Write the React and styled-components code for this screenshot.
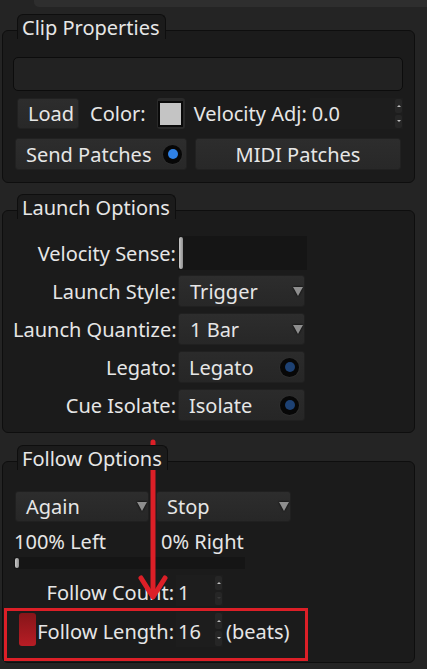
import React from "react";
import styled, { createGlobalStyle } from "styled-components";

const GlobalStyle = createGlobalStyle`
  html, body {
    margin: 0;
    padding: 0;
    background: #242424;
  }
`;

const Screen = styled.div`
  position: relative;
  width: 427px;
  height: 669px;
  overflow: hidden;
  background: #242424;
  display: flex;
  flex-direction: column;
  font-family: "Noto Sans", "DejaVu Sans", sans-serif;
  font-size: 20px;
  color: #e6e6e6;
  box-sizing: border-box;

  * {
    box-sizing: border-box;
  }
`;

const TopStrip = styled.div`
  margin-left: 34px;
  height: 7px;
  background: #2e2e2e;
  border-bottom-left-radius: 5px;
`;

const Group = styled.section`
  display: flex;
  flex-direction: column;
  margin: ${(p) => p.$top}px 12px 0 2px;
`;

const Tab = styled.div`
  align-self: flex-start;
  position: relative;
  z-index: 1;
  margin-left: 15px;
  margin-bottom: -9px;
  height: 25px;
  padding: 0 5px 0 4px;
  line-height: 26px;
  background: #1b1b1b;
  border: 1px solid #0e0e0e;
  border-bottom: none;
  border-radius: 6px 6px 0 0;
  white-space: nowrap;
`;

const Panel = styled.div`
  display: flex;
  flex-direction: column;
  background: #1b1b1b;
  border: 1px solid #0e0e0e;
  border-radius: 6px;
  padding: ${(p) => p.$pad};
`;

const TextInput = styled.div`
  height: 34px;
  background: #222222;
  border: 1px solid #0c0c0c;
  border-radius: 5px;
`;

const Row = styled.div`
  display: flex;
  align-items: center;
  gap: ${(p) => p.$gap || 0}px;
  height: ${(p) => p.$h}px;
  margin-top: ${(p) => p.$mt || 0}px;
  margin-left: ${(p) => p.$ml || 0}px;
`;

const Button = styled.div`
  display: flex;
  align-items: center;
  justify-content: ${(p) => (p.$center ? "center" : "space-between")};
  width: ${(p) => p.$w}px;
  height: 100%;
  padding: 0 ${(p) => (p.$center ? 0 : 4)}px 0 ${(p) => (p.$center ? 0 : 10)}px;
  background: linear-gradient(#2d2d2d, #282828);
  border: 1px solid #212121;
  border-radius: 3px;
  white-space: nowrap;
`;

const Label = styled.span`
  white-space: nowrap;
  margin-left: ${(p) => p.$ml || 0}px;
`;

const SwatchButton = styled.div`
  display: flex;
  align-items: center;
  justify-content: center;
  flex: none;
  width: 28px;
  height: 100%;
  margin-left: 11px;
  background: #2a2a2a;
  border-radius: 3px;

  &::after {
    content: "";
    width: 21px;
    height: 22px;
    background: #c4c4c4;
    border: 2px solid #0a0a0a;
  }
`;

const Radio = styled.span`
  display: inline-flex;
  align-items: center;
  justify-content: center;
  flex: none;
  width: 19px;
  height: 19px;
  border-radius: 50%;
  background: #070707;
  box-shadow: 0 0 0 1px #2e2e2e;

  &::after {
    content: "";
    width: 10px;
    height: 10px;
    border-radius: 50%;
    background: ${(p) => (p.$bright ? "#2f80e4" : "#1d4173")};
  }
`;

const SpinBox = styled.div`
  display: flex;
  align-items: center;
  justify-content: space-between;
  flex: ${(p) => (p.$fill ? 1 : "none")};
  width: ${(p) => (p.$fill ? "auto" : `${p.$w}px`)};
  height: 100%;
  margin-left: ${(p) => p.$ml || 0}px;
  padding: 0 1px 0 2px;
  background: #1d1d1d;
`;

const SpinArrows = styled.div`
  display: flex;
  flex-direction: column;
  gap: 2px;
  height: 100%;
  padding: 1px 0;
`;

const SpinArrow = styled.span`
  flex: 1;
  width: 7px;
  display: flex;
  align-items: center;
  justify-content: center;
  background: #262626;
  border-radius: 2px;

  &::after {
    content: "";
    border-left: 2px solid transparent;
    border-right: 2px solid transparent;
    ${(p) => (p.$down ? "border-top" : "border-bottom")}: 2px solid
      ${(p) => (p.$dim ? "#3a3a3a" : "#bdbdbd")};
  }
`;

const FormGrid = styled.div`
  display: grid;
  grid-template-columns: 163px 128px;
  grid-auto-rows: 32px;
  column-gap: 2px;
  row-gap: 6px;
  align-items: center;
`;

const FormLabel = styled.span`
  text-align: right;
  white-space: nowrap;
`;

const SliderTrack = styled.div`
  height: ${(p) => p.$h}px;
  width: ${(p) => p.$w}px;
  margin-top: ${(p) => p.$mt || 0}px;
  margin-left: ${(p) => p.$ml || 0}px;
  background: #151515;
  display: flex;
  padding: 1px 0;

  &::before {
    content: "";
    width: 4px;
    margin-left: 1px;
    border-radius: 2px;
    background: linear-gradient(90deg, #c9c9c9, #8f8f8f);
  }
`;

const Combo = styled.div`
  display: flex;
  align-items: center;
  justify-content: space-between;
  width: ${(p) => p.$w || 127}px;
  height: ${(p) => p.$h || 32}px;
  padding: 0 1px 0 ${(p) => p.$pl || 11}px;
  background: linear-gradient(#2d2d2d, #272727);
  border: 1px solid #202020;
  border-radius: 3px;
  white-space: nowrap;
`;

const ComboArrow = styled.span`
  width: 0;
  height: 0;
  border-left: 5px solid transparent;
  border-right: 5px solid transparent;
  border-top: 9px solid #8e8e8e;
  filter: drop-shadow(0 0 1px #000);
`;

const CheckField = styled.div`
  display: flex;
  align-items: center;
  justify-content: space-between;
  width: 127px;
  height: 32px;
  padding: 0 5px 0 10px;
  background: linear-gradient(#2b2b2b, #262626);
  border: 1px solid #202020;
  border-radius: 3px;
`;

const PercentRow = styled.div`
  display: grid;
  grid-template-columns: 148px auto;
  align-items: center;
  height: 24px;
  margin-top: 6px;
`;

const FollowRow = styled.div`
  display: grid;
  grid-template-columns: 163px 47px auto;
  align-items: center;
  height: ${(p) => p.$h}px;
  margin-top: ${(p) => p.$mt}px;
`;

const FollowLabel = styled.div`
  display: flex;
  align-items: center;
  justify-content: space-between;
  padding-left: 6px;
  padding-right: 2px;
  white-space: nowrap;
  height: 100%;
`;

const LowText = styled.span`
  padding-top: 4px;
  white-space: nowrap;
  margin-left: ${(p) => p.$ml || 0}px;
`;

const ColorChip = styled.span`
  width: 17px;
  height: 33px;
  border-radius: 3px;
  background: linear-gradient(#861519, #b71d25);
`;

const Overlay = styled.svg`
  position: absolute;
  left: 0;
  top: 0;
  pointer-events: none;
`;

const Spin = ({ w, ml, fill, value, dimDown, low }) => (
  <SpinBox $w={w} $ml={ml} $fill={fill}>
    {low ? <LowText>{value}</LowText> : <span>{value}</span>}
    <SpinArrows>
      <SpinArrow />
      <SpinArrow $down $dim={dimDown} />
    </SpinArrows>
  </SpinBox>
);

const App = () => {
  return (
    <Screen>
      <GlobalStyle />
      <TopStrip />

      <Group $top={7}>
        <Tab>Clip Properties</Tab>
        <Panel $pad="26px 11px 12px 10px">
          <TextInput />
          <Row $h={31} $mt={7} $ml={4}>
            <Button $w={62}>Load</Button>
            <Label $ml={11}>Color:</Label>
            <SwatchButton />
            <Label $ml={9}>Velocity Adj:</Label>
            <Spin fill ml={3} value="0.0" />
          </Row>
          <Row $h={32} $mt={9} $ml={2} $gap={8}>
            <Button $w={172}>
              Send Patches
              <Radio $bright />
            </Button>
            <Button $w={206} $center>
              MIDI Patches
            </Button>
          </Row>
        </Panel>
      </Group>

      <Group $top={11}>
        <Tab>Launch Options</Tab>
        <Panel $pad="26px 11px 11px 10px">
          <FormGrid>
            <FormLabel>Velocity Sense:</FormLabel>
            <SliderTrack $h={34} $w={129} />
            <FormLabel>Launch Style:</FormLabel>
            <Combo>
              Trigger
              <ComboArrow />
            </Combo>
            <FormLabel>Launch Quantize:</FormLabel>
            <Combo>
              1 Bar
              <ComboArrow />
            </Combo>
            <FormLabel>Legato:</FormLabel>
            <CheckField>
              Legato
              <Radio />
            </CheckField>
            <FormLabel>Cue Isolate:</FormLabel>
            <CheckField>
              Isolate
              <Radio />
            </CheckField>
          </FormGrid>
        </Panel>
      </Group>

      <Group $top={12}>
        <Tab>Follow Options</Tab>
        <Panel $pad="29px 11px 15px 10px">
          <Row $h={31} $ml={2} $gap={7}>
            <Combo $w={134} $h={31} $pl={10}>
              Again
              <ComboArrow />
            </Combo>
            <Combo $w={135} $h={31} $pl={10}>
              Stop
              <ComboArrow />
            </Combo>
          </Row>
          <PercentRow>
            <Label $ml={1}>100% Left</Label>
            <Label>0% Right</Label>
          </PercentRow>
          <SliderTrack $h={12} $w={231} $mt={5} $ml={1} />
          <FollowRow $h={31} $mt={6}>
            <FollowLabel>
              <span />
              <LowText>Follow Count:</LowText>
            </FollowLabel>
            <Spin w={47} value="1" dimDown low />
          </FollowRow>
          <FollowRow $h={35} $mt={6}>
            <FollowLabel>
              <ColorChip />
              <LowText>Follow Length:</LowText>
            </FollowLabel>
            <Spin w={47} value="16" low />
            <LowText $ml={3}>(beats)</LowText>
          </FollowRow>
        </Panel>
      </Group>

      <Overlay width="427" height="669" viewBox="0 0 427 669">
        <rect
          x="5.5"
          y="609.5"
          width="301"
          height="50"
          fill="none"
          stroke="#dc1f27"
          strokeWidth="3"
        />
        <line
          x1="153"
          y1="442"
          x2="153"
          y2="596"
          stroke="#dc1f27"
          strokeWidth="5"
          strokeLinecap="round"
        />
        <polyline
          points="141,578 153,597 165,578"
          fill="none"
          stroke="#dc1f27"
          strokeWidth="5"
          strokeLinecap="round"
          strokeLinejoin="round"
        />
      </Overlay>
    </Screen>
  );
};

export default App;
